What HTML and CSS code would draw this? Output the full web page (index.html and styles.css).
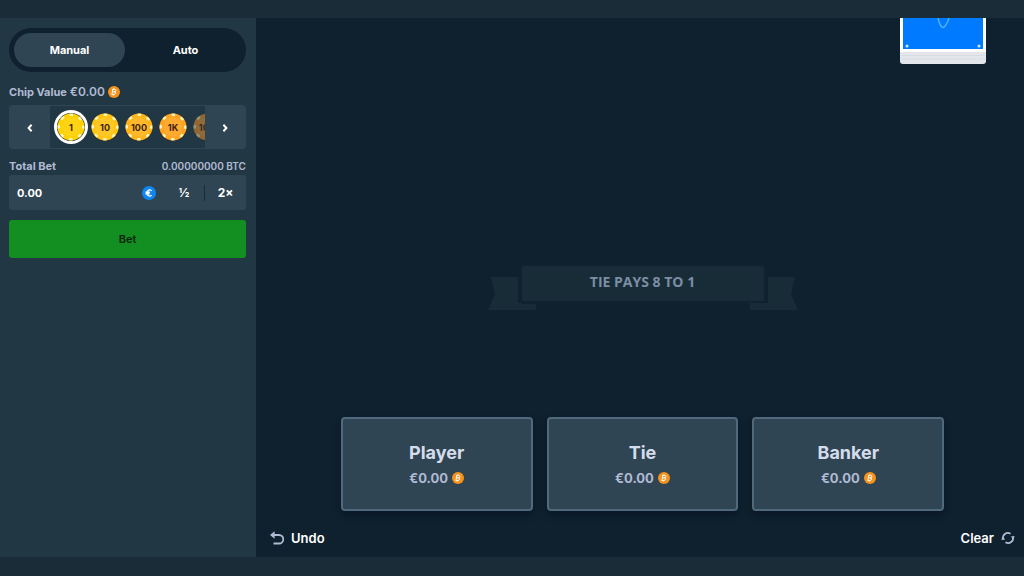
FILE: index.html
```html
<!DOCTYPE html>
<html lang="en">
<head>
<meta charset="utf-8">
<meta name="viewport" content="width=device-width, initial-scale=1">
<title>Baccarat</title>
<link rel="stylesheet" href="styles.css">
</head>
<body>
<svg class="defs" aria-hidden="true">
  <symbol id="btc" viewBox="0 0 24 24">
    <circle cx="12" cy="12" r="12" fill="#f7931a"/>
    <path d="M9.6 6.2 7.8 17.3M9.2 6.8h4.1q3.2.3 2.5 2.8-.7 2-3.3 2H8.7M12.5 11.6q3.3.2 2.7 2.8-.7 2.4-4 2.4H7.5M12 4.6l-.4 2M11 17l-.4 2.4" fill="none" stroke="#fff" stroke-width="2"/>
  </symbol>
  <symbol id="chip" viewBox="0 0 28 28">
    <circle cx="14" cy="14.500" r="13.500" fill="#000" opacity=".35"/>
    <circle cx="14" cy="14" r="13.5" fill="currentColor"/>
    <circle cx="14" cy="14" r="12.200" fill="none" stroke="#fff3b8" stroke-width="2.400" stroke-dasharray="3.600 5.980" stroke-dashoffset="1.800"/>
    <circle cx="14" cy="14" r="9.5" fill="#fff" opacity=".08"/>
  </symbol>
</svg>
<div class="app">
  <aside class="sidebar">
    <div class="tabs">
      <button class="tab active" type="button">Manual</button>
      <button class="tab" type="button">Auto</button>
    </div>
    <div class="label chip-label"><span>Chip Value</span><span class="amount">€0.00</span><svg class="coin"><use href="#btc"/></svg></div>
    <div class="chips">
      <button class="arrow" type="button" aria-label="Previous chips"><svg viewBox="0 0 8 10"><path d="M5.6 1.8 2.6 5l3 3.2"/></svg></button>
      <div class="chip-list">
        <button class="chip c1 selected" type="button"><svg><use href="#chip"/></svg><span>1</span></button>
        <button class="chip c2" type="button"><svg><use href="#chip"/></svg><span>10</span></button>
        <button class="chip c3" type="button"><svg><use href="#chip"/></svg><span>100</span></button>
        <button class="chip c4" type="button"><svg><use href="#chip"/></svg><span>1K</span></button>
        <button class="chip c5" type="button" disabled><svg><use href="#chip"/></svg><span>10K</span></button>
      </div>
      <button class="arrow" type="button" aria-label="Next chips"><svg viewBox="0 0 8 10"><path d="M2.4 1.8 5.4 5l-3 3.2"/></svg></button>
    </div>
    <div class="label total-label"><label for="total">Total Bet</label><span class="btc-value">0.00000000 BTC</span></div>
    <div class="field">
      <input id="total" type="text" value="0.00">
      <svg class="euro" viewBox="0 0 24 24"><circle cx="12" cy="12" r="12" fill="#0f86f0"/><path d="M16.5 8.2a5 5 0 1 0 0 7.6M6 10.7h7.5M6 13.3h7" fill="none" stroke="#fff" stroke-width="2.2"/></svg>
      <button class="multiply" type="button">½</button>
      <button class="multiply" type="button">2×</button>
    </div>
    <button class="bet" type="button">Bet</button>
  </aside>
  <main class="game">
    <svg class="shoe" viewBox="0 0 86 46" aria-hidden="true">
      <path d="M0 0h86v43q0 3-3 3H3q-3 0-3-3z" fill="#e3e6ea"/>
      <path d="M0 0h86v34H0z" fill="#fff"/>
      <path d="M1 37.5h84M1 41h84" stroke="#d9dde1"/>
      <path d="M3 0h80v31H3z" fill="#007bff"/>
      <path d="M38 0q2 9 5 9.500q3-.5 6-9.500" fill="none" stroke="#4fb2ff" stroke-width="1.500"/>
      <circle cx="7" cy="28" r="1.500" fill="#cfe8ff"/><circle cx="79" cy="28" r="1.500" fill="#cfe8ff"/>
    </svg>
    <div class="banner">
      <svg class="tail" viewBox="0 0 48 34" aria-hidden="true"><path d="M3 0h27v26h18v6q0 1-1 1H0L7 17z"/></svg>
      <p class="banner-text">TIE PAYS 8 TO 1</p>
      <svg class="tail right" viewBox="0 0 48 34" aria-hidden="true"><path d="M3 0h27v26h18v6q0 1-1 1H0L7 17z"/></svg>
    </div>
    <div class="bets">
      <button class="spot" type="button"><span class="name">Player</span><span class="stake">€0.00<svg class="coin"><use href="#btc"/></svg></span></button>
      <button class="spot" type="button"><span class="name">Tie</span><span class="stake">€0.00<svg class="coin"><use href="#btc"/></svg></span></button>
      <button class="spot" type="button"><span class="name">Banker</span><span class="stake">€0.00<svg class="coin"><use href="#btc"/></svg></span></button>
    </div>
    <div class="actions">
      <button class="action" type="button"><svg viewBox="0 0 14 14"><path d="M2 4h7a4 4 0 0 1 0 8.500H3.500" fill="none" stroke="#b1bad3" stroke-width="1.800"/><path d="M4.600.2v7.600L0 4z" fill="#b1bad3"/></svg>Undo</button>
      <button class="action" type="button">Clear<svg viewBox="0 0 14 14"><path d="M2 8.200A5 5 0 0 1 9.500 2.700M12 5.800A5 5 0 0 1 4.500 11.300" fill="none" stroke="#b1bad3" stroke-width="1.800"/><path d="M.2 8.800 2.200 5.600 4 8.800zM13.800 5.200 11.800 8.400 10 5.200z" fill="#b1bad3"/></svg></button>
    </div>
  </main>
</div>
</body>
</html>
```
FILE: styles.css
```css
* { box-sizing: border-box; }
body {
  margin: 0;
  background: #1a2c38;
  color: #fff;
  font-family: Inter, "Liberation Sans", sans-serif;
  font-size: 12px;
  font-weight: 700;
}
button, input { font: inherit; color: inherit; border: 0; padding: 0; background: none; }
button { cursor: pointer; }
.defs { position: absolute; width: 0; height: 0; }
.app {
  display: flex;
  min-height: 100vh;
  padding: 18px 0 19px;
  background: #1a2c38;
}
.sidebar {
  flex: 0 0 25%;
  min-width: 0;
  display: flex;
  flex-direction: column;
  padding: 10px 10px 0 9px;
  background: #213743;
}
.tabs {
  display: grid;
  grid-template-columns: 1fr 1fr;
  gap: 5px;
  padding: 5px;
  border-radius: 22px;
  background: #0f212e;
}
.tab { height: 34px; border-radius: 17px; font-size: 11px; }
.tab.active { background: #2f4553; }
.label { display: flex; align-items: center; color: #b1bad3; font-size: 11px; line-height: 16px; }
.chip-label { margin: 12px 0 5px; gap: 3px; }
.amount { font-size: 12px; font-weight: 600; }
.coin { width: 12px; height: 12px; }
.chips {
  display: flex;
  height: 44px;
  border: 1px solid #2f4553;
  border-radius: 3px;
  overflow: hidden;
}
.arrow { flex: 0 0 40px; background: #2f4553; }
.arrow svg { width: 8px; height: 10px; vertical-align: middle; fill: none; stroke: #fff; stroke-width: 2; }
.chip-list { flex: 1; min-width: 0; display: flex; align-items: center; gap: 6px; padding-left: 7px; overflow: hidden; }
.chip { flex: 0 0 28px; height: 28px; display: grid; place-items: center; border-radius: 50%; color: #3d1e0b; font-size: 9px; }
.chip > * { grid-area: 1 / 1; }
.chip svg { width: 28px; height: 28px; }
.chip.selected { box-shadow: 0 0 0 3px #fff; }
.c1 svg { color: #ffd100; }
.c2 svg { color: #ffc414; }
.c3 svg { color: #ffb31a; }
.c4 svg { color: #ffa420; }
.c5 svg { color: #ff9820; }
.chip:disabled { opacity: 0.5; }
.total-label { justify-content: space-between; margin: 9px 0 1px; }
.btc-value { font-size: 10px; font-weight: 600; }
.field {
  display: flex;
  align-items: center;
  height: 35px;
  border-radius: 3px;
  background: #2f4553;
}
.field input { flex: 1; min-width: 0; height: 100%; padding-left: 8px; font-size: 11px; }
.euro { flex: none; width: 14px; height: 14px; margin-right: 8px; }
.multiply { flex: 0 0 41px; height: 16px; }
.multiply:nth-of-type(1) { border-right: 1px solid #1a2c38; }
.bet { height: 38px; margin-top: 10px; border-radius: 3px; background: #128f20; color: #05240c; font-size: 11px; font-weight: 600; }
.game {
  flex: 1;
  min-width: 0;
  display: flex;
  flex-direction: column;
  padding: 0 9px 9px 14px;
  background: #0f212e;
}
.shoe { width: 86px; height: 46px; align-self: flex-end; margin-right: 29px; }
.banner { display: flex; justify-content: center; margin: auto 0 106px; }
.tail { width: 48px; height: 34px; margin: 11px -14px 0 0; fill: #182c38; }
.tail.right { margin: 11px 0 0 -14px; transform: scaleX(-1); }
.banner-text {
  position: relative;
  width: 242px;
  height: 35px;
  margin: 0;
  border-radius: 2px;
  background: #182c38;
  box-shadow: 0 0 0 3px #10222f;
  color: #7c8ea3;
  font: 700 14px/32px "Open Sans", sans-serif;
  text-align: center;
}
.bets { display: grid; grid-template-columns: repeat(3, 1fr); gap: 14px; width: 81%; align-self: center; }
.spot {
  display: flex;
  flex-direction: column;
  align-items: center;
  padding: 22px 0 21px;
  border: 2px solid #4f6a7e;
  border-radius: 4px;
  background: #2f4553;
  box-shadow: 0 4px 6px #0a1824;
}
.name { color: #d5dceb; font-size: 18px; line-height: 24px; }
.stake { display: flex; align-items: center; gap: 4px; color: #b1bad3; font-size: 13px; line-height: 20px; margin-top: 3px; }
.actions { display: flex; justify-content: space-between; margin-top: 17px; }
.action { display: flex; align-items: center; gap: 7px; font-size: 13px; font-weight: 600; line-height: 20px; }
.action svg { width: 14px; height: 14px; }
```
